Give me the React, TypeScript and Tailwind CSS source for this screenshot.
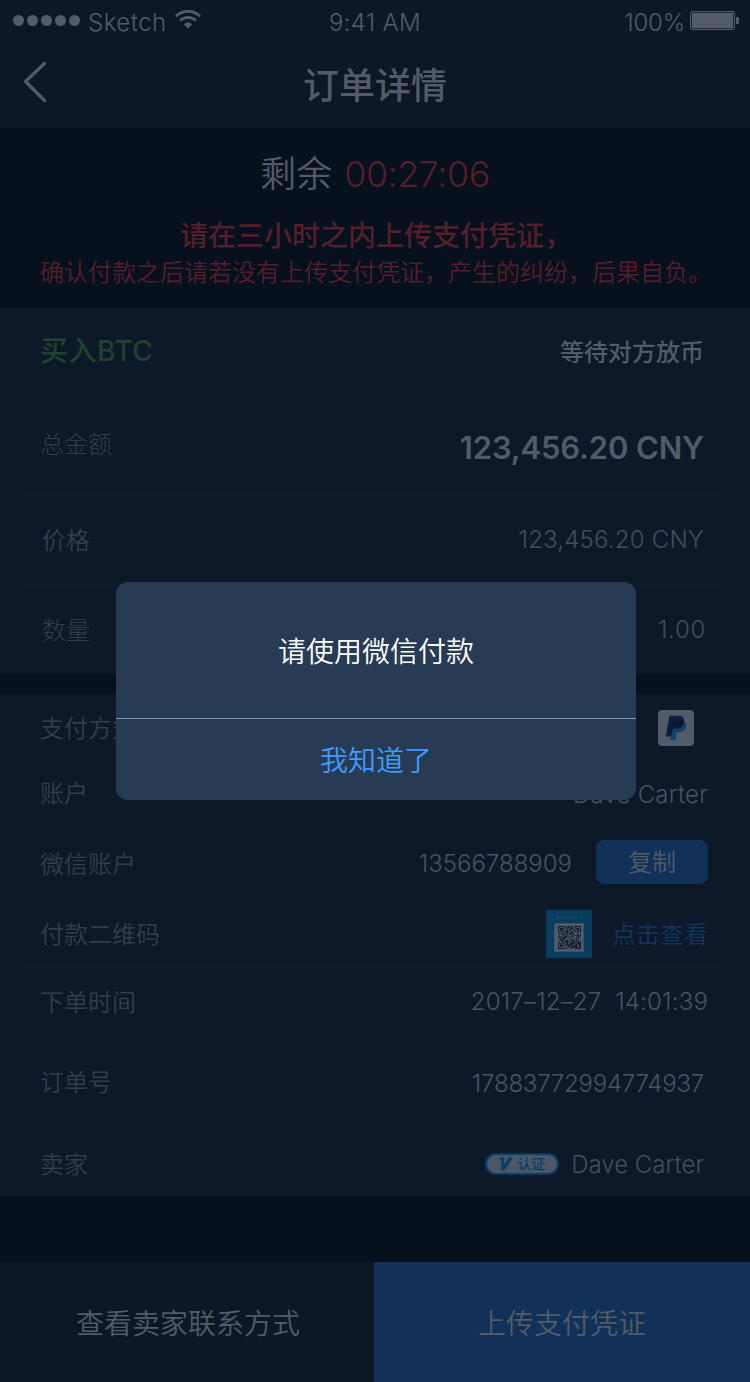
import React from "react";

function Row({ className, label, labelClass = "", children }: { className: string; label: string; labelClass?: string; children: React.ReactNode }) {
  return (
    <div className={`mx-6 flex items-center justify-between whitespace-nowrap pl-4 ${className}`}>
      <span className={`pt-0.5 font-[350] text-[#343d49] ${labelClass}`}>{label}</span>
      {children}
    </div>
  );
}

function PayPal() {
  return (
    <span className="flex h-9 w-9 items-center justify-center rounded-[4px] bg-[#525b69]">
      <svg viewBox="0 0 22 26" className="h-[26px] w-[22px]">
        <path d="M8.3 5.5h9.6c2.6 1.2 3.8 3.3 3.1 6.2-.8 3.8-3.5 5.5-7.4 5.5h-1.8l-1.2 7.8H5.1z" fill="#0f4468" />
        <path d="M4.3.8h9.2c4.3 0 6.2 2.5 5.5 6.2-.8 4.5-3.8 6.6-8.2 6.6H7.6l-1.5 8H.8z" fill="#0e1e40" />
        <path d="M7.2 7c.2-.9.7-1.3 1.6-1.3h7.5c1 0 1.9.2 2.7.5-.7 5.1-3.8 7.4-8.2 7.4H7.6l-1.2 6.3H5.2z" fill="#0b1634" />
      </svg>
    </span>
  );
}

const N = 25;
function isFinder(x: number, y: number) {
  return (x < 8 && y < 8) || (x > N - 9 && y < 8) || (x < 8 && y > N - 9);
}

function qrPath() {
  let seed = 91;
  let d = "";
  for (let y = 0; y < N; y++) {
    for (let x = 0; x < N; x++) {
      seed = (seed * 1103515245 + 12345) % 2147483648;
      if (!isFinder(x, y) && seed / 2147483648 > 0.46) d += `M${x} ${y}h1v1h-1z`;
    }
  }
  return d;
}

function QrCode() {
  return (
    <span className="relative top-px flex h-12 w-[46px] flex-col items-center bg-[#083d5e]">
      <span className="mt-[6px] h-[5px] whitespace-nowrap text-[3.4px] leading-[5px] text-[#2b5270]">支付宝支付扫一扫</span>
      <span className="mt-[2px] flex h-[29px] w-[30px] items-center justify-center border border-[#3a5367] bg-[#525b69]">
        <svg viewBox="0 0 25 25" className="h-[23px] w-[23px]">
          <path d={qrPath()} fill="#10182a" />
          {[[0, 0], [18, 0], [0, 18]].map(([x, y]) => (
            <g key={`${x}-${y}`} fill="#10182a">
              <path fillRule="evenodd" d={`M${x} ${y}h7v7h-7zM${x + 1} ${y + 1}v5h5v-5z`} />
              <rect x={x + 2} y={y + 2} width="3" height="3" />
            </g>
          ))}
          <rect x="10" y="10" width="5" height="5" fill="#34465c" />
        </svg>
      </span>
    </span>
  );
}

function StatusBar() {
  return (
    <div className="relative flex h-10 items-center justify-between pl-[13px] pr-[11px] pt-[5px] text-2xl font-[350] leading-none text-[#525b67]">
      <div className="flex items-center">
        <div className="mb-[5px] flex gap-[3px]">
          {[0, 1, 2, 3, 4].map((i) => (
            <i key={i} className="h-[11px] w-[11px] rounded-full bg-[#525b67]" />
          ))}
        </div>
        <span className="ml-2 w-[78px] tracking-[0.5px]">Sketch</span>
        <svg viewBox="0 0 26 19" className="mb-[6px] ml-[9px] h-[19px] w-[26px]" fill="none" stroke="currentColor" strokeWidth="2.7">
          <path d="M1 6.3C7.7-.4 18.3-.4 25 6.3M5.2 10.5c4.4-4.3 11.2-4.3 15.6 0" />
          <path d="M13 18.5l-4.2-4.2c2.3-2.3 6.1-2.3 8.4 0z" fill="currentColor" stroke="none" />
        </svg>
      </div>
      <span className="absolute inset-x-0 pt-px text-center tracking-[0.3px]">9:41 AM</span>
      <div className="flex items-center">
        <span className="tracking-[-0.2px]">100%</span>
        <svg viewBox="0 0 49 19" className="mb-[5px] ml-[5px] h-[19px] w-[49px]">
          <rect x=".6" y=".6" width="43.8" height="17.8" rx="2.4" fill="none" stroke="#525b67" strokeWidth="1.2" />
          <rect x="2" y="2" width="41" height="15" rx="1" fill="#525b67" />
          <path d="M46 6h1.5c1 0 1.5.6 1.5 1.5v4c0 .9-.5 1.5-1.5 1.5H46z" fill="#525b67" />
        </svg>
      </div>
    </div>
  );
}

export default function App() {
  return (
    <main className="relative flex h-[1382px] w-[750px] flex-col overflow-hidden bg-[#07101d] text-2xl leading-none [font-family:Inter,'Noto_Sans_CJK_SC',sans-serif]">
      <header className="h-32 bg-[#0d1827]">
        <StatusBar />
        <div className="relative flex h-[88px] items-center justify-center">
          <svg viewBox="0 0 24 42" className="absolute left-[23px] top-[21px] h-[42px] w-6" fill="none" stroke="#525b67" strokeWidth="3.2" strokeLinecap="round" strokeLinejoin="round">
            <path d="M21.5 2.5L2.5 20.5l19 19" />
          </svg>
          <h1 className="pt-[3px] text-4xl font-medium leading-none text-[#525b67]">订单详情</h1>
        </div>
      </header>

      <section className="flex h-[180px] flex-col items-center whitespace-nowrap pt-7 text-[#541f2b]">
        <div className="flex items-center text-4xl font-[350] leading-none">
          <span className="text-[#525b67]">剩余</span>
          <span className="ml-3 tracking-[-0.5px]">00:27:06</span>
        </div>
        <p className="mt-[30px] pl-0.5 text-[28px] font-medium leading-none">请在三小时之内上传支付凭证，</p>
        <p className="mt-[11px] pl-0.5 font-[350]">确认付款之后请若没有上传支付凭证，产生的纠纷，后果自负。</p>
      </section>

      <section className="h-[366px] bg-[#0d1928]">
        <Row className="h-[89px] border-b border-[#101c2b] pr-[22px]" label="买入BTC" labelClass="!pt-0 mb-0.5 tracking-[0.5px] !text-[28px] !font-medium !text-[#1f4330]">
          <span className="pt-0.5 font-medium text-[#525b67]">等待对方放币</span>
        </Row>
        <Row className="h-[98px] border-b border-[#101c2b] pr-[22px]" label="总金额" labelClass="mb-1 !font-light">
          <span className="pt-[3px] text-[31px] font-semibold tracking-[-0.15px] text-[#525b67]">123,456.20 CNY</span>
        </Row>
        <Row className="h-[91px] border-b border-[#101c2b] pl-[18px] pr-[22px]" label="价格">
          <span className="font-light tracking-[0.2px] text-[#444e5b]">123,456.20 CNY</span>
        </Row>
        <Row className="h-[88px] pl-[18px] pr-5" label="数量" labelClass="!font-light">
          <span className="font-light tracking-[0.7px] text-[#444e5b]">1.00</span>
        </Row>
      </section>

      <section className="mt-5 h-[502px] bg-[#0d1928] text-[#4a535f]">
        <Row className="h-[67px] pr-8" label="支付方式">
          <PayPal />
        </Row>
        <Row className="h-[68px] border-b border-[#101c2b] pr-[18px]" label="账户" labelClass="mb-1">
          <span className="font-[350] tracking-[0.2px]">Dave Carter</span>
        </Row>
        <Row className="h-[70px] border-b border-[#101c2b] pr-[18px]" label="微信账户">
          <div className="flex items-center">
            <span className="font-[350]">13566788909</span>
            <button className="mb-1 ml-6 h-11 w-28 rounded-lg bg-[#123158] pt-0.5 text-2xl font-[350] leading-none text-[#525a66]">复制</button>
          </div>
        </Row>
        <Row className="h-[68px] border-b border-[#101c2b] pr-[18px]" label="付款二维码" labelClass="!pt-1">
          <div className="flex items-center gap-5">
            <QrCode />
            <span className="pt-1 font-[350] text-[#13355f]">点击查看</span>
          </div>
        </Row>
        <Row className="h-[70px] border-b border-[#101c2b] pr-[18px]" label="下单时间">
          <span className="whitespace-pre font-[350] tracking-[0.18px]">2017–12–27  14:01:39</span>
        </Row>
        <Row className="h-[81px] border-b border-[#101c2b] pr-[22px] pt-3" label="订单号" labelClass="mb-[3px]">
          <span className="pt-0.5 font-[350] tracking-[-0.22px]">17883772994774937</span>
        </Row>
        <Row className="h-[78px] pr-[22px] pt-[14px]" label="卖家">
          <div className="flex items-center gap-3">
            <span className="mb-px flex h-[22px] w-[74px] items-center rounded-full border-2 border-[#0b3c66] bg-[#4b5767] pl-3 text-sm font-medium leading-none text-[#0b3c66]">
              <svg viewBox="0 0 14 14" className="h-[14px] w-[14px]" fill="#0b3c66">
                <path d="M0 .5h5.2L4.8 8 10 .5h4L5.2 13.5H2L2.3 3.2z" />
              </svg>
              <span className="ml-1 text-[14px]">认证</span>
            </span>
            <span className="pt-0.5 font-light text-[#444e5b]">Dave Carter</span>
          </div>
        </Row>
      </section>

      <footer className="mt-auto flex h-[120px] text-[28px] font-[350] text-[#525b67]">
        <button className="w-[374px] bg-[#0d1827] pl-0.5 pt-[3px] leading-none">查看卖家联系方式</button>
        <button className="flex-1 bg-[#123158] pt-[3px] leading-none">上传支付凭证</button>
      </footer>

      <div role="dialog" className="absolute left-[116px] top-[582px] flex h-[218px] w-[520px] flex-col overflow-hidden rounded-xl bg-[#273c54] text-[28px] font-[350]">
        <p className="flex h-[137px] items-center justify-center border-b border-[#6d9dce] pt-[3px] text-white">请使用微信付款</p>
        <button className="flex-1 pt-[3px] leading-none text-[#3f9bff]">我知道了</button>
      </div>
    </main>
  );
}
